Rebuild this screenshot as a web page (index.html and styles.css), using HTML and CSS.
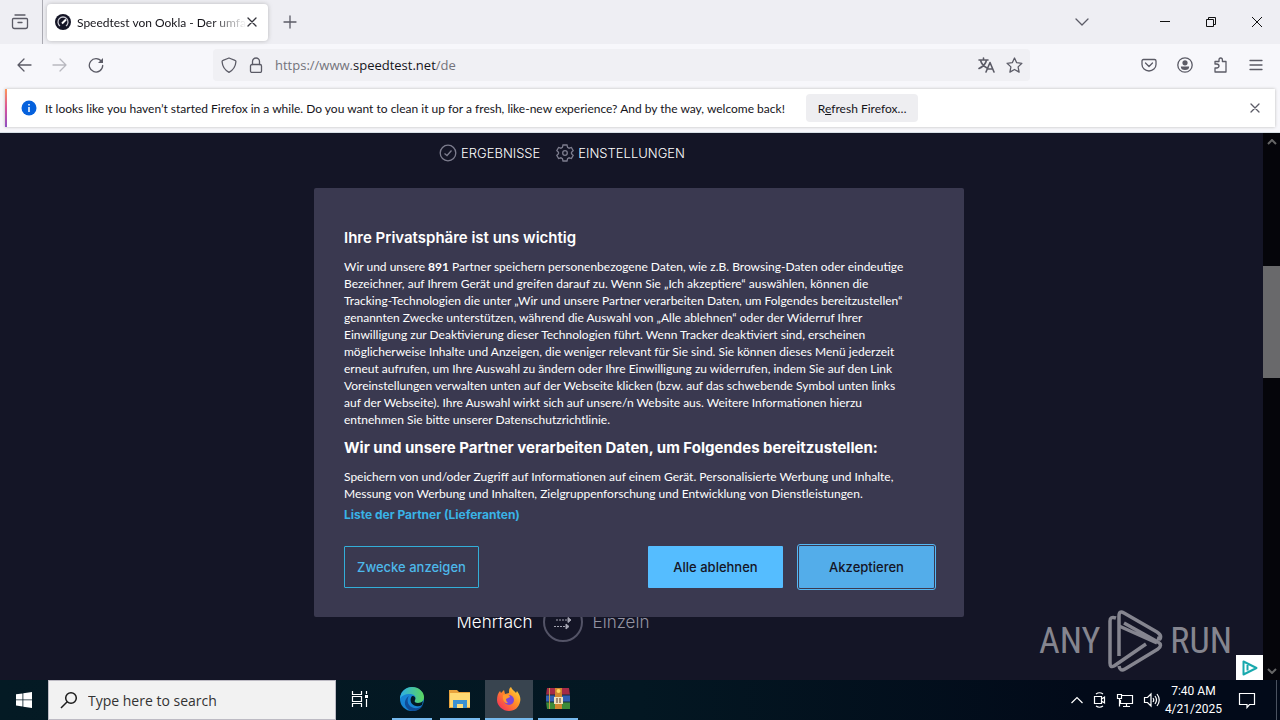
FILE: index.html
```html
<!DOCTYPE html>
<html lang="de">
<head>
<meta charset="utf-8">
<title>Speedtest von Ookla</title>
<link rel="stylesheet" href="styles.css">
</head>
<body>
<header class="tabbar">
  <button class="icon-btn view-btn" aria-label="Firefox View"><svg width="18" height="18" viewBox="0 0 18 18" class="line"><path d="M4 2h10M2.500 5.500h13q1 0 1 1v7q0 2-2 2h-11q-2 0-2-2v-7q0-1 1-1zM7 9.500h4"/></svg></button>
  <div class="tab">
    <svg width="16" height="16" viewBox="0 0 16 16"><circle cx="8" cy="8" r="8" fill="#141526"/><path d="M5 12a5 5 0 1 1 6 0" fill="none" stroke="#c9c9d2" stroke-width="1.300"/><path d="M7 9.500l4-4" stroke="#fff" stroke-width="2"/></svg>
    <span class="tab-title">Speedtest von Ookla - Der umfa</span>
    <button class="icon-btn" aria-label="Tab schließen"><svg width="10" height="10" viewBox="0 0 10 10" class="line dark"><path d="M1 1l8 8M9 1l-8 8"/></svg></button>
  </div>
  <button class="icon-btn new-tab" aria-label="Neuer Tab"><svg width="14" height="14" viewBox="0 0 14 14" class="line"><path d="M7 1v12M1 7h12"/></svg></button>
  <div class="window-controls">
    <button class="icon-btn list-tabs" aria-label="Tabs auflisten"><svg width="14" height="8" viewBox="0 0 14 8" class="line"><path d="M1 1l6 6 6-6"/></svg></button>
    <button class="icon-btn" aria-label="Minimieren"><svg width="12" height="12" viewBox="0 0 12 12" class="thin"><path d="M1 5.500h10"/></svg></button>
    <button class="icon-btn" aria-label="Verkleinern"><svg width="12" height="12" viewBox="0 0 12 12" class="thin"><path d="M1.500 3.500h7v7h-7zM3.500 3.500v-2h7v7h-2"/></svg></button>
    <button class="icon-btn" aria-label="Schließen"><svg width="12" height="12" viewBox="0 0 12 12" class="thin"><path d="M1 1l10 10M11 1L1 11"/></svg></button>
  </div>
</header>

<nav class="toolbar">
  <div class="nav-buttons">
    <button class="icon-btn" aria-label="Zurück"><svg width="16" height="16" viewBox="0 0 16 16" class="line"><path d="M15 8H2M8 2L2 8l6 6"/></svg></button>
    <button class="icon-btn faded" aria-label="Vor"><svg width="16" height="16" viewBox="0 0 16 16" class="line"><path d="M1 8h13M8 2l6 6-6 6"/></svg></button>
    <button class="icon-btn" aria-label="Neu laden"><svg width="16" height="16" viewBox="0 0 16 16" class="line"><path d="M13.500 4.500A6.700 6.700 0 1 0 14.700 8.500"/><path d="M15 1v5h-5z" fill="#5b5b66" stroke="none"/></svg></button>
  </div>
  <div class="urlbar">
    <svg width="16" height="16" viewBox="0 0 16 16" class="line"><path d="M8 1l6 2.300q1 .3.900 1.500Q14.400 12 8 15.300 1.600 12 1.100 4.800 1 3.600 2 3.300z"/></svg>
    <svg width="14" height="16" viewBox="0 0 14 16" class="line"><rect x="1.500" y="7.500" width="11" height="8" rx="1.500"/><path d="M3.500 7.500V4.500a3.500 3.500 0 0 1 7 0v3"/></svg>
    <span class="url"><span>https://www.</span><span class="domain">speedtest.net</span><span>/de</span></span>
    <span class="url-actions">
      <svg width="17" height="16" viewBox="0 0 17 16" class="line bold"><path d="M1 3h9M5.500 1v2M2.500 3q1 5 6.500 8M8.500 3q-1 5.500-7.500 8.500M8 15l4-9.500L16 15M9.500 12h5"/></svg>
      <svg width="17" height="16" viewBox="0 0 17 16" class="line"><path d="M8.500 1l2.200 4.700 5.200.6-3.800 3.600 1 5.200-4.600-2.600-4.600 2.600 1-5.200L1.100 6.300l5.200-.6z"/></svg>
    </span>
  </div>
  <div class="extras">
    <svg width="16" height="16" viewBox="0 0 16 16" class="line"><path d="M2.500 2.500h11q1.500 0 1.500 1.500v3.500a7 6.500 0 0 1-14 0V4q0-1.500 1.500-1.500zM4.500 6L8 9.500 11.500 6"/></svg>
    <svg width="16" height="16" viewBox="0 0 16 16" class="line"><circle cx="8" cy="8" r="7.200"/><g fill="#5b5b66" stroke="none"><circle cx="8" cy="5.800" r="2.600"/><path d="M3.800 9.500h8.400q0 3.500-4.200 3.500t-4.200-3.500z"/></g></svg>
    <svg width="16" height="16" viewBox="0 0 16 16" class="line"><path d="M2 6V4.500h4V3q0-2 1.700-2t1.700 2v1.500h3.600v10.500H2v-4h1.500q2.500-.2 2.500-2t-2.500-2H2z"/></svg>
    <button class="icon-btn" aria-label="Menü"><svg width="14" height="12" viewBox="0 0 14 12" class="line"><path d="M1 1.500h12M1 6h12M1 10.500h12"/></svg></button>
  </div>
</nav>

<div class="notice-wrap">
  <div class="notice">
    <svg width="16" height="16" viewBox="0 0 16 16"><circle cx="8" cy="8" r="7.500" fill="#0561dd"/><path d="M8 7v5M8 4v1.600" stroke="#fff" stroke-width="1.500"/></svg>
    <span class="notice-text">It looks like you haven’t started Firefox in a while. Do you want to clean it up for a fresh, like-new experience? And by the way, welcome back!</span>
    <button class="refresh">R<u>e</u>fresh Firefox…</button>
    <button class="icon-btn notice-close" aria-label="Hinweis schließen"><svg width="10" height="10" viewBox="0 0 10 10" class="line"><path d="M1 1l8 8M9 1L1 9"/></svg></button>
  </div>
</div>

<main class="viewport">
  <div class="page">
    <div class="site-nav">
      <a href="#"><svg width="18" height="18" viewBox="0 0 18 18" class="grey"><circle cx="9" cy="9" r="7.800"/><path d="M5.500 9.500L8 11.500l4.500-5"/></svg>ERGEBNISSE</a>
      <a href="#"><svg width="18" height="18" viewBox="0 0 18 18" class="grey"><path d="M7 1h4l.6 2.300 1.500.9 2.300-.7 1.800 3.200L15.500 8.300v1.500l1.700 1.600-1.800 3.100-2.300-.7-1.500.9L11 17H7l-.6-2.300-1.500-.9-2.300.7-1.800-3.100 1.700-1.600V8.300L.8 6.700l1.800-3.200 2.300.7 1.500-.9z"/><circle cx="9" cy="9" r="2.300"/></svg>EINSTELLUNGEN</a>
    </div>
    <div class="mode">
      <span class="multi">Mehrfach</span>
      <svg width="40" height="40" viewBox="0 0 40 40"><circle cx="20" cy="20" r="19" fill="none" stroke="#535366" stroke-width="2"/><g stroke="#a5a5b2" fill="none"><path d="M13 18h13M11 24.500h13" stroke-dasharray="2 1"/><path d="M25 15.500l3 2.500-3 2.500zM23 22l3 2.500-3 2.500z" fill="#a5a5b2"/></g></svg>
      <span class="single">Einzeln</span>
    </div>

    <section class="consent" role="dialog" aria-labelledby="consent-title">
      <h1 id="consent-title">Ihre Privatsphäre ist uns wichtig</h1>
      <p>Wir und unsere <b>891</b> Partner speichern personenbezogene Daten, wie z.B. Browsing-Daten oder eindeutige<br>Bezeichner, auf Ihrem Gerät und greifen darauf zu. Wenn Sie „Ich akzeptiere“ auswählen, können die<br>Tracking-Technologien die unter „Wir und unsere Partner verarbeiten Daten, um Folgendes bereitzustellen“<br>genannten Zwecke unterstützen, während die Auswahl von „Alle ablehnen“ oder der Widerruf Ihrer<br>Einwilligung zur Deaktivierung dieser Technologien führt. Wenn Tracker deaktiviert sind, erscheinen<br>möglicherweise Inhalte und Anzeigen, die weniger relevant für Sie sind. Sie können dieses Menü jederzeit<br>erneut aufrufen, um Ihre Auswahl zu ändern oder Ihre Einwilligung zu widerrufen, indem Sie auf den Link<br>Voreinstellungen verwalten unten auf der Webseite klicken (bzw. auf das schwebende Symbol unten links<br>auf der Webseite). Ihre Auswahl wirkt sich auf unsere/n Website aus. Weitere Informationen hierzu<br>entnehmen Sie bitte unserer Datenschutzrichtlinie.</p>
      <h2>Wir und unsere Partner verarbeiten Daten, um Folgendes bereitzustellen:</h2>
      <p>Speichern von und/oder Zugriff auf Informationen auf einem Gerät. Personalisierte Werbung und Inhalte,<br>Messung von Werbung und Inhalten, Zielgruppenforschung und Entwicklung von Dienstleistungen.</p>
      <a class="vendors" href="#">Liste der Partner (Lieferanten)</a>
      <div class="actions">
        <button class="outline">Zwecke anzeigen</button>
        <button class="reject">Alle ablehnen</button>
        <button class="accept">Akzeptieren</button>
      </div>
    </section>

    <div class="watermark">
      <span>ANY</span>
      <svg width="56" height="64" viewBox="0 0 56 64"><g fill="none" stroke="#85858f" stroke-width="3.500" stroke-linejoin="round"><path d="M9 9Q3 7 3 12v42q0 5 4 3L39 35"/><path d="M12 47V7q0-6 5-3l33 19q5 3 3 7l-3-1"/><path d="M12 17l38 17M12 57q1 6 6 3l33-20q5-4 0-7L17 14"/></g></svg>
      <span>RUN</span>
    </div>
    <div class="adchoice"><svg width="16" height="16" viewBox="0 0 16 16" fill="none" stroke="#18a9ad" stroke-width="2" stroke-linejoin="round"><path d="M1.500 1.500v13L14.500 8zM5.500 5v5.500"/></svg></div>
  </div>
  <div class="scrollbar">
    <svg width="10" height="6" viewBox="0 0 10 6"><path d="M1 5l4-4 4 4"/></svg>
    <div class="track"><div class="thumb"></div></div>
    <svg width="10" height="6" viewBox="0 0 10 6"><path d="M1 1l4 4 4-4"/></svg>
  </div>
</main>

<footer class="taskbar">
  <button class="start" aria-label="Start"><svg width="16" height="16" viewBox="0 0 16 16" fill="#fff"><path d="M0 2.300L6.500 1.400v6.100H0zM7.300 1.300L16 0v7.500H7.300zM0 8.300h6.500v6.100L0 13.600zM7.300 8.300H16V16l-8.700-1.300z"/></svg></button>
  <label class="search"><svg width="18" height="18" viewBox="0 0 18 18" fill="none" stroke="#1c1c1c" stroke-width="1.500"><circle cx="11" cy="7" r="5.300"/><path d="M7.200 10.800L1 17"/></svg><input type="text" placeholder="Type here to search" aria-label="Type here to search"></label>
  <button class="app idle" aria-label="Task View"><svg width="18" height="16" viewBox="0 0 18 16" fill="none" stroke="#fff" stroke-width="1.200"><path d="M1.500 0v3.500h9V0M1.500 16v-3.500h9V16M1.500 5.500h9v5h-9zM15.500 0v3M15.500 8v8"/><path d="M14 4h3v3h-3z" fill="#fff" stroke="none"/></svg></button>
  <button class="app" aria-label="Edge"><svg width="26" height="26" viewBox="0 0 26 26"><defs><linearGradient id="edge-top" x1="0" x2="1"><stop offset="0" stop-color="#2daee8"/><stop offset="1" stop-color="#5bd65d"/></linearGradient></defs><circle cx="13" cy="13" r="12" fill="#1784d4"/><path d="M1 12C2 5 7 1 13 1c7 0 12 5 12 10 0 4-3 6-6 6-4 0-4-2-3-3 2-4-2-6-5-6-5 0-9 2-10 5z" fill="url(#edge-top)"/><path d="M10 10c-3 4-1 11 5 12 4 .6 7-1 9-3-3 6-10 7-14 5-6-4-5-11 0-14z" fill="#104d98"/><path d="M13 10c3 0 4 2 3 4s0 3 3 3c2 0 4-1 5-2l-1 4q-3 2-6 1c-5-1-7-6-4-10z" fill="#041a24"/></svg></button>
  <button class="app" aria-label="Explorer"><svg width="24" height="22" viewBox="0 0 24 22"><path d="M1 2h8l2 2h11v16H1z" fill="#e8a33d"/><path d="M2 5h20v14H2z" fill="#ffda73"/><path d="M5 20v-8h14v8h-4v-4H9v4z" fill="#3c91d1"/><path d="M9 20v-4h6v4z" fill="#fbdc80"/></svg></button>
  <button class="app active" aria-label="Firefox"><svg width="26" height="26" viewBox="0 0 26 26"><defs><linearGradient id="fox" x1="1" y1="0" x2="0" y2="1"><stop offset="0" stop-color="#ffe23f"/><stop offset=".45" stop-color="#ff8c26"/><stop offset="1" stop-color="#f21d65"/></linearGradient></defs><path d="M15 1c1 3 4 4 5 6l1-2c3 4 4 7 3 11-1 5-5 9-11 9S1 20 1 14c0-4 1-7 3-9l1 2 3-3 1 4 4-1c0-3 0-5 2-6z" fill="url(#fox)"/><circle cx="13" cy="14" r="5" fill="#7b47d6"/><path d="M7 9c4-1 7 0 7 2l-4 2c0 2 1 3 2 4-3 1-6-3-5-8z" fill="#ff9a2d"/></svg></button>
  <button class="app" aria-label="WinRAR"><svg width="26" height="24" viewBox="0 0 26 24"><path d="M2 1h22l1 7H1z" fill="#a42b48"/><path d="M1 8h24v7H1z" fill="#315fb4"/><path d="M1 15h24v7H2z" fill="#3c8b39"/><path d="M1 8h24M1 15h24" stroke="#172d38"/><path d="M4.500 1v21" stroke="#c79a4c"/><path d="M10 1h7v21h-7z" fill="#cf862f"/><path d="M9 10h9v7H9z" fill="#eee0bc"/><path d="M12 11v5M15 11v5" stroke="#54372a"/><circle cx="13.500" cy="4" r="2" fill="#ffd35c"/></svg></button>
  <div class="tray">
    <svg width="14" height="16" viewBox="0 0 14 16"><path d="M1.500 11L7 5.500l5.500 5.500"/></svg>
    <svg width="14" height="16" viewBox="0 0 14 16"><path d="M1.500 4.500h7v7h-7zM8.500 7l3-2v6l-3-2M3 2Q6.500-.5 10 2M3 14q3.500 2.500 7 0"/></svg>
    <svg width="18" height="16" viewBox="0 0 18 16"><path d="M6 3.500h10.500v8H4.500V8M10.500 11.500v3M7 14.500h7M1.500 2.500h4v4h-4zM3.500 6.500v8"/></svg>
    <svg width="18" height="16" viewBox="0 0 18 16"><path d="M1.500 5.500h3L8 2v12l-3.500-3.500h-3zM10 6q1.500 2 0 4M12 4q3 4 0 8M14 2q4.500 6 0 12"/></svg>
    <div class="clock"><span>7:40 AM</span><span>4/21/2025</span></div>
    <svg width="18" height="18" viewBox="0 0 18 18"><path d="M1.500 2.500h15v11h-5l-2.500 3v-3H1.500z"/></svg>
    <span class="show-desktop"></span>
  </div>
</footer>
</body>
</html>
```

FILE: styles.css
```css
* { box-sizing: border-box; }
body { margin: 0; height: 100vh; display: flex; flex-direction: column; overflow: hidden; background: #f7f7fb; color: #15141a; font-family: "Open Sans", "Noto Sans", sans-serif; font-size: 12px; }
button { font: inherit; color: inherit; border: 0; background: none; padding: 0; }
svg { display: block; flex: none; }
.icon-btn { display: flex; align-items: center; justify-content: center; flex: none; }
.line { fill: none; stroke: #5b5b66; stroke-width: 1.3; stroke-linejoin: round; stroke-linecap: round; }
.bold { stroke-width: 1.6; }
.dark { stroke: #33333b; }
.thin { fill: none; stroke: #111; stroke-width: 1; }

.tabbar { flex: none; height: 44px; display: flex; align-items: center; background: #eeeef3; }
.view-btn { width: 43px; height: 44px; padding-right: 3px; border-right: 1px solid #aaaab2; }
.tab { width: 221px; height: 37px; margin-left: 4px; padding: 0 11px 0 8px; display: flex; align-items: center; background: #fff; border-radius: 4px; box-shadow: 0 0 4px #8888; }
.tab-title { flex: 1; margin-left: 6px; white-space: nowrap; font-family: Lato, sans-serif; mask-image: linear-gradient(to right, #000 78%, transparent); }
.new-tab { margin-left: 15px; }
.window-controls { margin-left: auto; padding-right: 17px; display: flex; align-items: center; gap: 34px; }
.list-tabs { margin-right: 36px; }

.toolbar { flex: none; height: 43px; display: flex; align-items: center; padding: 0 17px 2px 16px; }
.nav-buttons, .extras { display: flex; align-items: center; gap: 20px; }
.nav-buttons { flex: 197 1 0; }
.extras { flex: 233 1 0; justify-content: flex-end; }
.faded { opacity: .4; }
.urlbar { flex: 802 1 0; height: 32px; padding: 0 7px 0 8px; display: flex; align-items: center; gap: 12px; background: #f0f0f4; border-radius: 4px; color: #73737b; }
.url { font-size: 13px; }
.domain { color: #15141a; }
.url-actions { margin-left: auto; display: flex; gap: 11px; }

.notice-wrap { flex: none; height: 46px; padding: 2px 5px 5px; border-bottom: 1px solid #d8e0e6; }
.notice { height: 38px; display: flex; align-items: center; padding: 0 15px 0 14px; background: #fff; border-left: 2px solid; border-image: linear-gradient(#ff9a55, #d8529c, #8a4fc4) 1; box-shadow: 0 0 3px #bbb; font-family: Lato, sans-serif; }
.notice-text { margin-left: 8px; white-space: nowrap; }
.refresh { margin-left: 21px; height: 28px; padding: 0 12px; border-radius: 4px; background: #eeeef1; }
.notice-close { margin-left: auto; }

.viewport { flex: 1; min-height: 0; display: flex; font-family: Inter, sans-serif; }
.page { flex: 1; position: relative; display: flex; flex-direction: column; background: #141526; color: #fff; }
.site-nav { display: flex; gap: 16px; justify-content: center; padding: 11px 139px 0 0; }
.site-nav a { display: flex; align-items: center; gap: 4px; color: #fff; text-decoration: none; font-size: 13px; line-height: 18px; font-weight: 300; }
.grey { fill: none; stroke: #7d7d8e; stroke-width: 1.3; }
.mode { margin-top: auto; padding: 0 157px 38px 0; display: flex; justify-content: center; align-items: center; gap: 10px; font-size: 17px; font-weight: 300; }
.single { color: #9393a1; }
.consent { position: absolute; top: 55px; left: 314px; right: 299px; padding: 40px 29px 27px 30px; background: #3a3950; border-radius: 2px; white-space: nowrap; }
.consent h1 { margin: 0 0 10px; font-size: 15px; line-height: 20px; font-weight: 600; }
.consent h2 { margin: 10px 0; font-size: 15px; line-height: 20px; font-weight: 700; }
.consent p { margin: 0; font-family: Lato, sans-serif; font-size: 12px; line-height: 17px; }
.vendors { display: block; margin-top: 4px; color: #39b3e6; font-size: 12px; line-height: 17px; font-weight: 700; text-decoration: none; }
.actions { margin-top: 21px; display: flex; align-items: center; gap: 15px; font-size: 13px; font-weight: 500; }
.actions button { width: 135px; height: 42px; border-radius: 1px; color: #141526; }
.actions .outline { margin-right: auto; border: 1px solid #33aed8; color: #4db8ea; }
.actions .reject { background: #55bdff; }
.actions .accept { margin: 2px 1px; background: #53adea; outline: 1px solid #55b8f4; outline-offset: 1px; }
.watermark { position: absolute; right: 31px; bottom: 7px; display: flex; align-items: center; gap: 7px; color: #85858f; font-family: "Roboto Condensed", "Liberation Sans Narrow", Roboto, sans-serif; font-size: 36px; line-height: 64px; }
.adchoice { position: absolute; right: 0; bottom: 0; width: 27px; height: 25px; display: flex; align-items: center; justify-content: center; background: #fff; }
.scrollbar { width: 17px; display: flex; flex-direction: column; align-items: center; padding: 6px 0; background: #05050a; }
.scrollbar svg { fill: none; stroke: #666; stroke-width: 2; }
.track { flex: 1; width: 100%; padding-top: 121px; }
.thumb { height: 112px; background: #69696b; }

.taskbar { flex: none; height: 40px; display: flex; align-items: stretch; background: linear-gradient(90deg, #041a24, #031722 50%, #020a19 85%); color: #fff; }
.start { width: 48px; display: flex; align-items: center; justify-content: center; }
.search { width: 288px; display: flex; align-items: center; gap: 10px; padding-left: 11px; background: #f2f2f2; border: 1px solid #bdbbc4; }
.search input { flex: 1; min-width: 0; border: 0; padding: 0; background: none; font: 14px "Open Sans", sans-serif; outline: 0; }
.search input::placeholder { color: #333; opacity: 1; }
.app { width: 40px; margin: 0 4px; display: flex; align-items: center; justify-content: center; border-bottom: 2px solid #76b9ed; }
.app.idle { border-color: transparent; margin-right: 8px; }
.app.active { width: 48px; margin: 0 1px; background: #38444f; }
.tray { margin-left: auto; display: flex; align-items: center; gap: 8px; }
.tray svg { fill: none; stroke: #fff; stroke-width: 1.2; }
.tray svg + svg { margin-left: 1px; }
.clock { margin-left: -4px; display: flex; flex-direction: column; align-items: center; font-family: Roboto, sans-serif; font-size: 12px; line-height: 18px; }
.tray .clock + svg { margin: 0 12px 0 8px; }
.show-desktop { width: 4px; align-self: stretch; border-left: 1px solid #4a5260; }
```
